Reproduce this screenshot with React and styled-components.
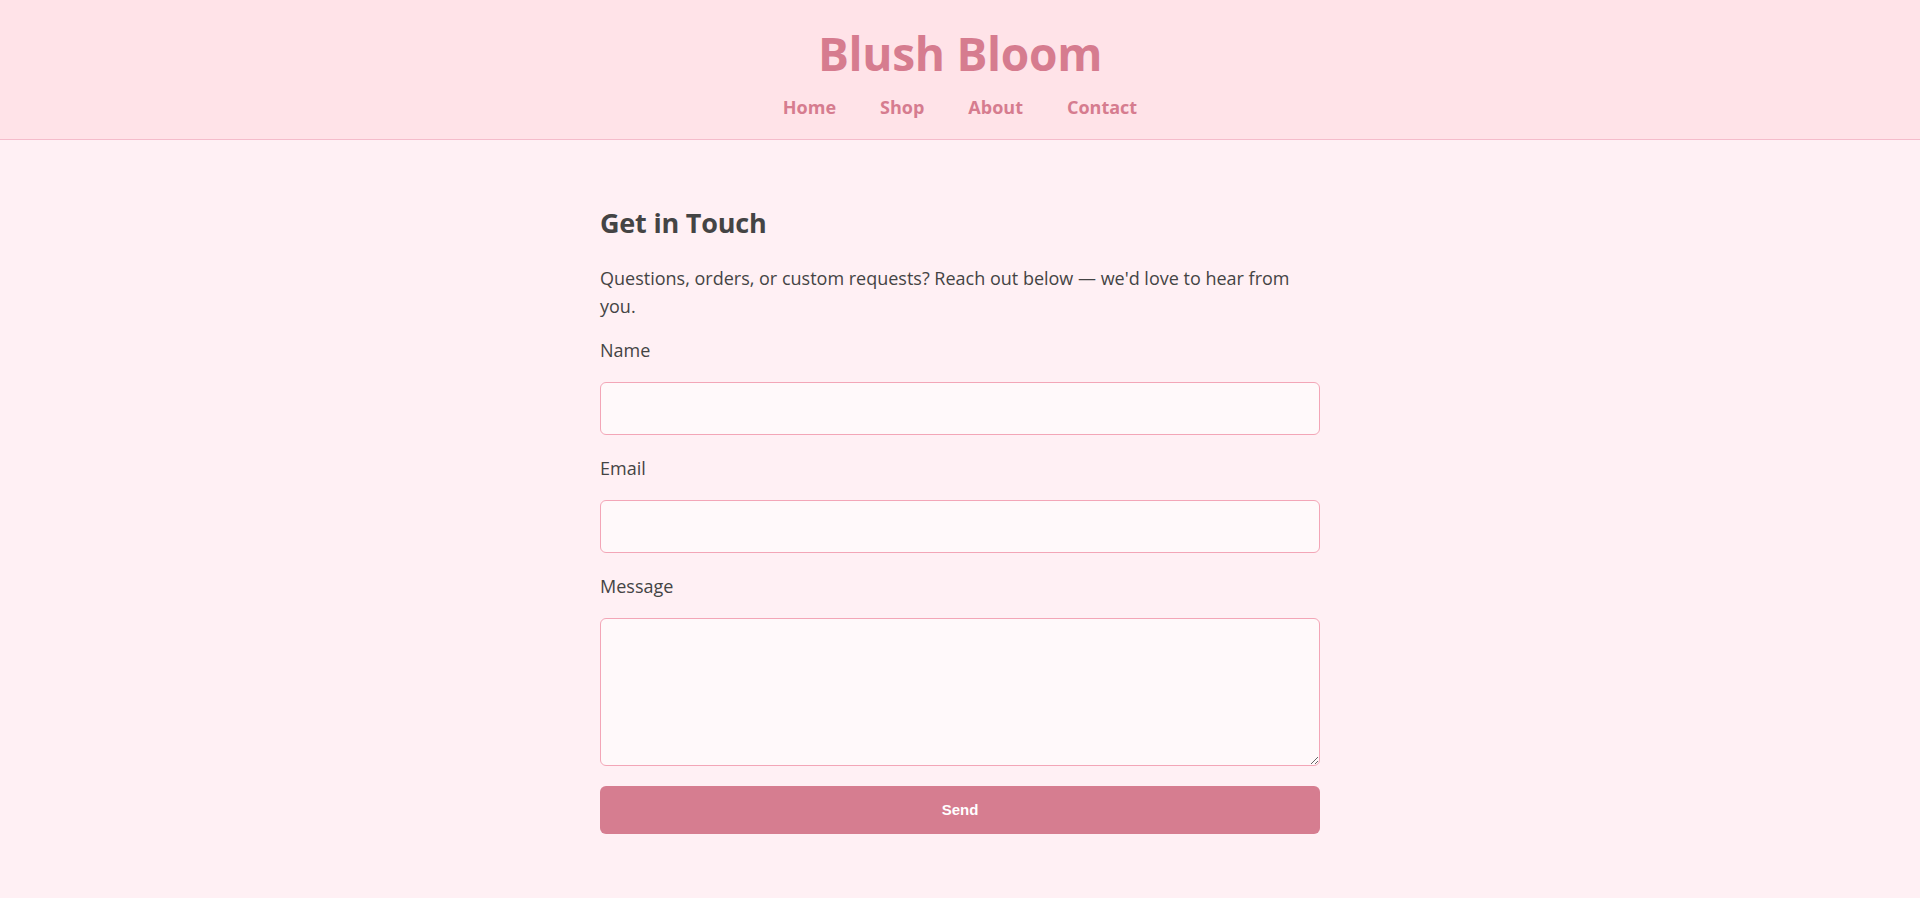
import React from "react";
import styled, { createGlobalStyle } from "styled-components";

const GlobalStyle = createGlobalStyle`
  html, body {
    margin: 0;
    padding: 0;
    background-color: #fff0f4;
  }
  body {
    font-family: "Open Sans", "Noto Sans", sans-serif;
    color: #444;
  }
  * {
    box-sizing: border-box;
  }
`;

const Header = styled.header`
  background-color: #ffe3e8;
  border-bottom: 1px solid #f5bccb;
  padding: 25px 0 20px;
  text-align: center;
`;

const Title = styled.h1`
  margin: 0;
  font-size: 46px;
  line-height: 57.6px;
  font-weight: 700;
  color: #d67c8f;
  letter-spacing: -0.3px;
`;

const Nav = styled.nav`
  display: flex;
  justify-content: center;
  gap: 44px;
  margin-top: 12px;
`;

const NavLink = styled.a`
  font-size: 18px;
  line-height: 24px;
  font-weight: 700;
  color: #d67c8f;
  text-decoration: none;
  cursor: pointer;
`;

const Main = styled.main`
  width: 720px;
  margin: 0 auto;
  padding: 66px 0 60px;
`;

const Heading = styled.h2`
  margin: 0;
  font-size: 27px;
  line-height: 34.6px;
  font-weight: 700;
  color: #444;
  letter-spacing: -0.2px;
`;

const Intro = styled.p`
  margin: 24px 0 17px;
  font-size: 18px;
  line-height: 28px;
  color: #444;
`;

const Form = styled.form`
  display: flex;
  flex-direction: column;
`;

const Label = styled.label`
  display: block;
  font-size: 18px;
  line-height: 27px;
  color: #444;
  margin-bottom: 17.5px;
`;

const fieldStyles = `
  width: 100%;
  border: 1px solid #f3a6b7;
  border-radius: 6px;
  background-color: #fff9fa;
  font-family: "Open Sans", sans-serif;
  font-size: 16px;
  color: #444;
  padding: 12px;
  outline: none;
`;

const Input = styled.input`
  ${fieldStyles}
  height: 53px;
  margin-bottom: 20.5px;
`;

const TextArea = styled.textarea`
  ${fieldStyles}
  height: 148px;
  margin-bottom: 20px;
  resize: vertical;
  display: block;
`;

const SendButton = styled.button`
  width: 100%;
  height: 48px;
  border: none;
  border-radius: 6px;
  background-color: #d67d90;
  color: #fff;
  font-family: "Liberation Sans", Arial, sans-serif;
  font-size: 15px;
  font-weight: 700;
  cursor: pointer;
`;

const links = ["Home", "Shop", "About", "Contact"];

export default function App() {
  return (
    <>
      <GlobalStyle />
      <Header>
        <Title>Blush Bloom</Title>
        <Nav>
          {links.map(l => (
            <NavLink key={l}>{l}</NavLink>
          ))}
        </Nav>
      </Header>
      <Main>
        <Heading>Get in Touch</Heading>
        <Intro>
          Questions, orders, or custom requests? Reach out below — we'd love to
          hear from you.
        </Intro>
        <Form onSubmit={e => e.preventDefault()}>
          <Label htmlFor="name">Name</Label>
          <Input id="name" type="text" />
          <Label htmlFor="email">Email</Label>
          <Input id="email" type="email" />
          <Label htmlFor="message">Message</Label>
          <TextArea id="message" />
          <SendButton type="submit">Send</SendButton>
        </Form>
      </Main>
    </>
  );
}
